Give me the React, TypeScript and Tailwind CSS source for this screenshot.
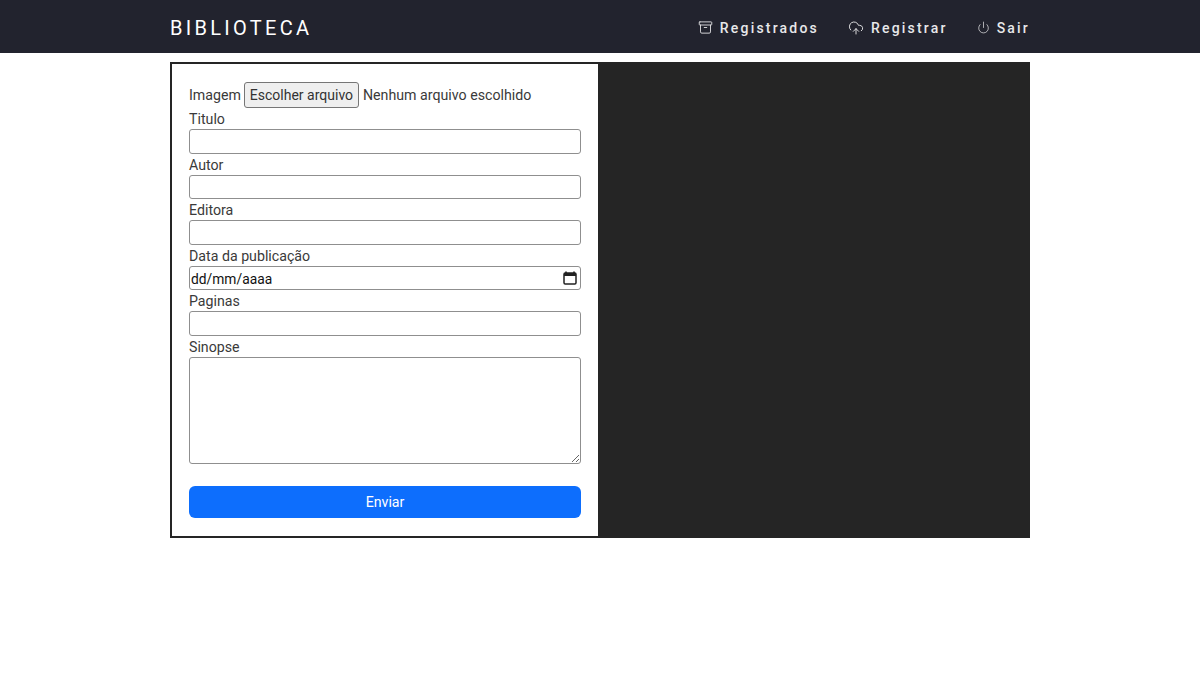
import { Archive, CloudUpload, Power } from "lucide-react";

function NavLink({ icon, label }: { icon: React.ReactNode; label: string }) {
  return (
    <a className="flex items-center gap-[7px] text-[14px] font-medium tracking-[2.2px] text-[#e8e8ea]">
      {icon}
      <span className="pt-[1px]">{label}</span>
    </a>
  );
}

function Field({ label }: { label: string }) {
  return (
    <div className="flex flex-col">
      <label className="h-[21px] pt-[1px] leading-[21px]">{label}</label>
      <input className="h-[24.6px] w-full rounded-[3px] border border-[#8f8f8f] bg-white" />
    </div>
  );
}

export default function App() {
  return (
    <div className="min-h-[674px] bg-white font-['Roboto',sans-serif] text-[14.2px] text-[#3a3a3a]">
      <nav className="h-[53px] bg-[#22232e]">
        <div className="mx-auto flex h-full w-[860px] items-center justify-between pt-[2px]">
          <span className="text-[20px] tracking-[3.3px] text-white">BIBLIOTECA</span>
          <div className="flex items-center gap-[29px]">
            <NavLink icon={<Archive size={15} strokeWidth={1.4} />} label="Registrados" />
            <NavLink icon={<CloudUpload size={16} strokeWidth={1.4} />} label="Registrar" />
            <NavLink icon={<Power size={13} strokeWidth={1.3} />} label="Sair" />
          </div>
        </div>
      </nav>

      <main className="mx-auto mt-[9px] flex h-[476px] w-[860px] border-2 border-[#252525]">
        <form className="flex w-[426px] flex-col px-[17px] pt-[18px]">
          <div className="flex h-[26px] items-center">
            <span className="pt-[1px]">Imagem</span>
            <span className="ml-[3px] flex h-[26px] w-[115px] items-center justify-center rounded-[3px] border border-[#767676] bg-[#efefef] pt-[1px] text-[14px] text-[#333]">
              Escolher arquivo
            </span>
            <span className="ml-[4px] pt-[1px]">Nenhum arquivo escolhido</span>
          </div>
          <div className="flex flex-col">
            <Field label="Titulo" />
            <Field label="Autor" />
            <Field label="Editora" />
            <div className="flex flex-col">
              <label className="h-[21px] pt-[1px] leading-[21px]">Data da publicação</label>
              <div className="flex h-[24.6px] items-center justify-between rounded-[3px] border border-[#8f8f8f] pr-[3px] pl-[1px] text-[#111]">
                <span className="pt-[2px] text-[13.8px]">dd/mm/aaaa</span>
                <svg width="14" height="14" viewBox="0 0 14 14" className="text-[#222]">
                  <path d="M3 0.5v2M11 0.5v2" stroke="currentColor" strokeWidth="1.6" />
                  <rect x="1" y="2" width="12" height="11" rx="1.2" fill="none" stroke="currentColor" strokeWidth="1.5" />
                  <rect x="1" y="2" width="12" height="3" fill="currentColor" />
                </svg>
              </div>
            </div>
            <Field label="Paginas" />
            <div className="flex flex-col">
              <label className="h-[21px] pt-[1px] leading-[21px]">Sinopse</label>
              <textarea className="block h-[107px] w-full rounded-[3px] border border-[#8f8f8f] bg-white" />
            </div>
          </div>
          <button type="button" className="mt-[22px] h-[32.5px] w-full rounded-[6px] bg-[#0d6efd] text-white">
            Enviar
          </button>
        </form>
        <div className="flex-1 bg-[#252525]" />
      </main>
    </div>
  );
}
